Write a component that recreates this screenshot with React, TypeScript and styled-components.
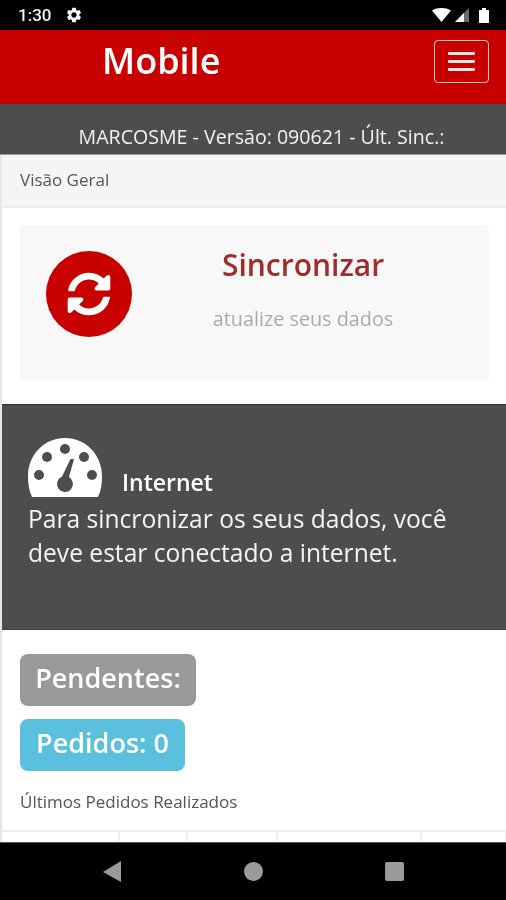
import React from 'react';
import styled, { createGlobalStyle } from 'styled-components';
import { FaSyncAlt } from 'react-icons/fa';
import { MdSettings } from 'react-icons/md';

const GlobalStyle = createGlobalStyle`
	html, body {
		margin: 0;
		padding: 0;
		background: #fff;
	}
	* {
		box-sizing: border-box;
	}
`;

const tableColumns = [118, 68, 90, 144, 85];

const App: React.FunctionComponent = () => {
	return (
		<Screen>
			<GlobalStyle />
			<StatusBar>
				<StatusLeft>
					<Clock>1:30</Clock>
					<MdSettings size={18} color="#fff" />
				</StatusLeft>
				<StatusRight>
					<svg width="19" height="14" viewBox="0 0 19 14">
						<path d="M0 2.5C2.5.8 5.8 0 9.5 0s7 .8 9.5 2.5L9.5 14z" fill="#fff" />
					</svg>
					<svg width="15" height="14" viewBox="0 0 15 14">
						<path d="M14 0v14H0z" fill="#6b6b6b" />
						<path d="M9 5v9H0z" fill="#fff" />
					</svg>
					<svg width="10" height="15" viewBox="0 0 10 15">
						<path d="M3 0h4v2h3v13H0V2h3z" fill="#fff" />
					</svg>
				</StatusRight>
			</StatusBar>

			<Navbar>
				<Brand>Mobile</Brand>
				<MenuButton>
					<MenuLine />
					<MenuLine />
					<MenuLine />
				</MenuButton>
			</Navbar>

			<UserBar>MARCOSME - Versão: 090621 - Últ. Sinc.:</UserBar>

			<Content>
				<Breadcrumb>Visão Geral</Breadcrumb>

				<SyncSection>
					<SyncCard>
						<SyncCircle>
							<FaSyncAlt size={44} color="#fff" />
						</SyncCircle>
						<SyncText>
							<SyncTitle>Sincronizar</SyncTitle>
							<SyncSubtitle>atualize seus dados</SyncSubtitle>
						</SyncText>
					</SyncCard>
				</SyncSection>

				<InfoPanel>
					<InfoHeading>
						<svg width="76" height="59" viewBox="0 0 76 59">
							<path
								fill="#fff"
								fillRule="evenodd"
								d="M5 59C2 53 1 46 1 38 1 17 17 0 38 0s37 17 37 38c0 8-1 15-4 21zM38 6a5 5 0 1 0 0 10 5 5 0 0 0 0-10zM20 14a5 5 0 1 0 0 10 5 5 0 0 0 0-10zM57 14a5 5 0 1 0 0 10 5 5 0 0 0 0-10zM12 32a5 5 0 1 0 0 10 5 5 0 0 0 0-10zM65 32a5 5 0 1 0 0 10 5 5 0 0 0 0-10zM43.5 21h3.5L42 39.1A8 8 0 1 1 35 38.6z"
							/>
						</svg>
						<InfoTitle>Internet</InfoTitle>
					</InfoHeading>
					<InfoBody>Para sincronizar os seus dados, você deve estar conectado a internet.</InfoBody>
				</InfoPanel>

				<Summary>
					<Badge color="#999999" width={176}>
						Pendentes:
					</Badge>
					<Badge color="#5bc0de" width={165}>
						Pedidos: 0
					</Badge>
					<SummaryLabel>Últimos Pedidos Realizados</SummaryLabel>
				</Summary>

				<TableRow>
					{tableColumns.map((width, index) => (
						<TableCell key={index} width={width} />
					))}
				</TableRow>
			</Content>

			<NavBar>
				<svg width="19" height="21" viewBox="0 0 19 21">
					<path d="M18 0v21L0 11z" fill="#9b9b9b" />
				</svg>
				<HomeDot />
				<RecentSquare />
			</NavBar>
		</Screen>
	);
};

const Screen = styled.div`
	display: flex;
	flex-direction: column;
	width: 506px;
	height: 900px;
	overflow: hidden;
	background: #fff;
	font-family: 'Open Sans', 'Liberation Sans', sans-serif;
	filter: blur(0.4px);
`;

/* ************** Status bar ************** */
const StatusBar = styled.div`
	display: flex;
	align-items: center;
	justify-content: space-between;
	flex: none;
	height: 30px;
	padding: 0 17px 0 18px;
	background: #000;
`;

const StatusLeft = styled.div`
	display: flex;
	align-items: center;
	gap: 14px;
`;

const Clock = styled.span`
	font-family: Roboto, 'Liberation Sans', sans-serif;
	font-size: 17px;
	font-weight: 500;
	color: #eee;
`;

const StatusRight = styled.div`
	display: flex;
	align-items: center;
	gap: 4px;

	svg:last-child {
		margin-left: 5px;
	}
`;

/* ************** Header ************** */
const Navbar = styled.header`
	display: flex;
	align-items: flex-start;
	justify-content: space-between;
	flex: none;
	height: 74px;
	padding: 9px 17px 0 102px;
	background: #c90000;
`;

const Brand = styled.h1`
	margin: 0;
	font-size: 36px;
	font-weight: 600;
	line-height: 44px;
	color: #fff;
`;

const MenuButton = styled.div`
	display: flex;
	flex-direction: column;
	align-items: center;
	justify-content: center;
	gap: 5px;
	width: 55px;
	height: 43px;
	margin-top: 1px;
	border: 1px solid #f3c4c4;
	border-radius: 4px;
`;

const MenuLine = styled.span`
	width: 27px;
	height: 3px;
	border-radius: 1px;
	background: #f8e3e3;
`;

const UserBar = styled.div`
	flex: none;
	height: 51px;
	padding: 20px 0 0 17px;
	border-bottom: 1px solid #9a9a9a;
	background: #4d4d4d;
	font-size: 19.6px;
	line-height: 25px;
	text-align: center;
	color: #f2f2f2;
	white-space: nowrap;
`;

/* ************** Content ************** */
const Content = styled.main`
	display: flex;
	flex-direction: column;
	flex: 1;
	min-height: 0;
	overflow: hidden;
	border-left: 2px solid #e7e7e7;
`;

const Breadcrumb = styled.div`
	flex: none;
	height: 53px;
	padding: 15px 18px 0;
	border-bottom: 2px solid #ececec;
	background: #f5f5f5;
	font-size: 17px;
	line-height: 20px;
	color: #555;
`;

const SyncSection = styled.section`
	flex: none;
	height: 196px;
	padding: 17px 17px 0 18px;
`;

const SyncCard = styled.div`
	display: flex;
	align-items: flex-start;
	height: 156px;
	padding: 26px 0 0 26px;
	border-radius: 4px;
	background: #f8f8f8;
`;

const SyncCircle = styled.div`
	display: flex;
	align-items: center;
	justify-content: center;
	flex: none;
	width: 86px;
	height: 86px;
	border-radius: 50%;
	background: #c90000;
`;

const SyncText = styled.div`
	display: flex;
	flex-direction: column;
	align-items: center;
	flex: 1;
	margin-top: -6px;
	padding-right: 15px;
`;

const SyncTitle = styled.div`
	font-size: 30px;
	font-weight: 600;
	line-height: 40px;
	color: #a02c2c;
`;

const SyncSubtitle = styled.div`
	margin-top: 21px;
	font-size: 19.8px;
	line-height: 26px;
	color: #ababab;
`;

const InfoPanel = styled.section`
	flex: none;
	height: 226px;
	padding: 33px 25px 0;
	border-top: 1px solid #333;
	border-bottom: 1px solid #444;
	background: #4d4d4d;
	color: #f4f4f4;
`;

const InfoHeading = styled.div`
	display: flex;
	align-items: flex-end;
	gap: 19px;
`;

const InfoTitle = styled.div`
	font-size: 23px;
	font-weight: 600;
	line-height: 30px;
	color: #fff;
`;

const InfoBody = styled.p`
	margin: 5px 0 0 1px;
	font-size: 24.6px;
	line-height: 34px;
`;

const Summary = styled.section`
	display: flex;
	flex-direction: column;
	align-items: flex-start;
	flex: none;
	padding: 24px 18px 0;
`;

const Badge = styled.div<{ color: string; width: number }>`
	display: flex;
	align-items: center;
	justify-content: center;
	width: ${props => props.width}px;
	height: 52px;
	margin-bottom: 13px;
	padding-bottom: 6px;
	border-radius: 8px;
	background: ${props => props.color};
	font-size: 27px;
	font-weight: 600;
	color: #fff;
`;

const SummaryLabel = styled.div`
	margin-top: 8px;
	font-size: 17px;
	line-height: 20px;
	color: #555;
`;

const TableRow = styled.div`
	display: flex;
	flex: none;
	height: 11px;
	margin-top: 18px;
	border-top: 2px solid #eee;
`;

const TableCell = styled.div<{ width: number }>`
	flex: none;
	width: ${props => props.width}px;
	height: 100%;
	border-right: 2px solid #eee;
`;

/* ************** Android nav ************** */
const NavBar = styled.nav`
	display: flex;
	align-items: center;
	flex: none;
	height: 58px;
	padding: 0 0 0 103px;
	gap: 122px;
	border-top: 1px solid #555;
	background: #000;
`;

const HomeDot = styled.span`
	width: 19px;
	height: 19px;
	border-radius: 50%;
	background: #9b9b9b;
`;

const RecentSquare = styled.span`
	width: 19px;
	height: 19px;
	border-radius: 2px;
	background: #9b9b9b;
`;

export default React.memo(App);
